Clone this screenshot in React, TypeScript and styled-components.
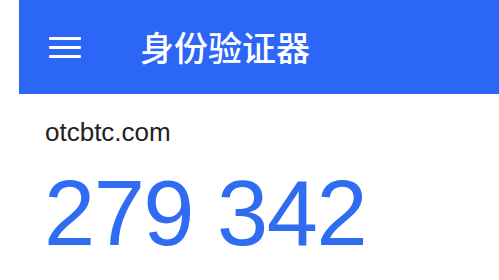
import React from 'react';
import styled, { createGlobalStyle } from 'styled-components';

const GlobalStyle = createGlobalStyle`
  html, body {
    margin: 0;
    padding: 0;
    background: #ffffff;
  }
`;

const Page = styled.div`
  width: 499px;
  height: 280px;
  overflow: hidden;
  background: #ffffff;
`;

const TopBar = styled.header`
  display: flex;
  align-items: center;
  height: 94px;
  margin-left: 19px;
  padding-left: 30px;
  gap: 59px;
  background-color: #2b66f6;
`;

const MenuButton = styled.div`
  display: flex;
  flex-direction: column;
  gap: 6px;
  width: 32px;
  margin-top: 1px;
`;

const MenuLine = styled.span`
  display: block;
  height: 3px;
  background: #ffffff;
  border-radius: 1px;
`;

const Title = styled.h1`
  margin: 0;
  font-family: "Noto Sans CJK SC", "Noto Sans", sans-serif;
  font-size: 34px;
  font-weight: 500;
  line-height: 1;
  color: #ffffff;
`;

const Account = styled.section`
  display: flex;
  flex-direction: column;
  padding: 25px 0 0 45px;
`;

const Issuer = styled.div`
  font-family: "Liberation Sans", Arial, sans-serif;
  font-size: 26px;
  line-height: 1;
  color: #222222;
`;

const Code = styled.div`
  margin-top: 22px;
  margin-left: -1px;
  font-family: "Liberation Sans", Arial, sans-serif;
  font-size: 92px;
  letter-spacing: -1.5px;
  line-height: 1;
  color: #2f6cf2;
  white-space: pre;
`;

const App: React.FC = () => {
  return (
    <>
      <GlobalStyle />
      <Page>
        <TopBar>
          <MenuButton>
            <MenuLine />
            <MenuLine />
            <MenuLine />
          </MenuButton>
          <Title>身份验证器</Title>
        </TopBar>
        <Account>
          <Issuer>otcbtc.com</Issuer>
          <Code>279 342</Code>
        </Account>
      </Page>
    </>
  );
};

export default App;
